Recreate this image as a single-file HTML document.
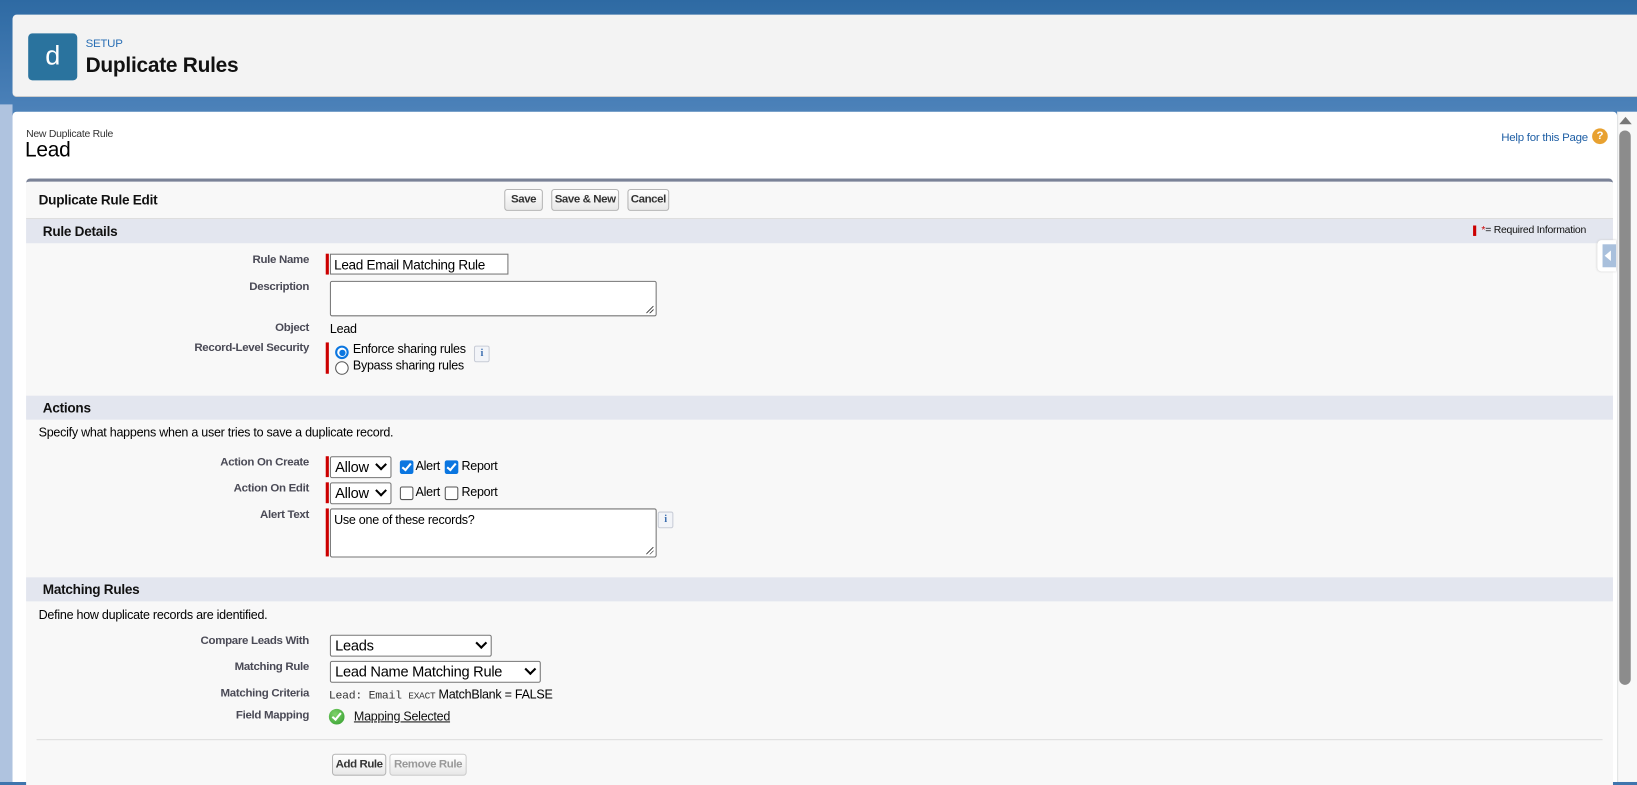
<!DOCTYPE html>
<html><head><meta charset="utf-8"><style>
html,body{margin:0;padding:0;width:1637px;height:782px;overflow:hidden;background:#3f75ad;font-family:"Liberation Sans",Arial,sans-serif;letter-spacing:-0.25px}
#w{position:absolute;left:0;top:0;width:1568px;height:749px;transform:scale(1.044);transform-origin:0 0;background:linear-gradient(#2e6aa3,#4a80b8 100px,#9fb8d8 300px,#b0c4df)}
.a{position:absolute}
.lbl{position:absolute;right:1272px;font-size:11px;color:#4a4a56;font-weight:bold;white-space:nowrap;text-align:right;letter-spacing:-0.3px}
.sec{position:absolute;left:25px;width:1520px;height:23px;background:#e3e6ef;font-size:13px;font-weight:bold;color:#111}
.sec span{position:absolute;left:16px;top:4px}
.btn{position:absolute;height:19px;border:1px solid #b5b5b5;border-radius:3px;background:linear-gradient(#fff,#e8e8e8);font-size:11px;font-weight:bold;color:#333;text-align:center;line-height:19px;box-sizing:content-box;letter-spacing:-0.4px}
.req{position:absolute;left:312px;width:3px;background:#c00}
.inp{position:absolute;background:#fff;border:1px solid #767676;box-sizing:border-box;font-size:13px;color:#000;white-space:nowrap;overflow:hidden}
.sel{position:absolute;background:#fff;border:1px solid #767676;border-radius:2px;box-sizing:border-box;font-size:14px;color:#000;padding-left:4px;line-height:18px;white-space:nowrap}
.sel i{position:absolute;right:5px;width:6px;height:6px;border-right:2px solid #000;border-bottom:2px solid #000;transform:rotate(45deg);top:3px}
.t{position:absolute;font-size:12px;color:#000;white-space:nowrap}
.info{position:absolute;width:13px;height:14px;border:1px solid #c8ccd6;border-radius:2px;background:#f2f4f8;color:#3d6fb0;font:bold 10px "Liberation Serif",serif;text-align:center;line-height:14px}
.cb{position:absolute;width:11px;height:11px;border:1px solid #555;border-radius:2px;background:#fff}
.cb.on{background:#0b76e0;border-color:#0b76e0}
.cb.on:after{content:"";position:absolute;left:3px;top:0px;width:3px;height:7px;border-right:2px solid #fff;border-bottom:2px solid #fff;transform:rotate(40deg)}
.rz{position:absolute;right:2px;bottom:2px;width:7px;height:7px;background:linear-gradient(135deg,transparent 45%,#555 45%,#555 55%,transparent 55%,transparent 70%,#555 70%,#555 80%,transparent 80%)}
</style></head><body><div id="w">
<div class="a" style="left:0;top:100px;width:12px;height:649px;background:#afc3df"></div>
<div class="a" style="left:12px;top:14px;width:1560px;height:78px;background:#f3f3f3;border-radius:4px;border-bottom:1px solid #ccc"></div>
<div class="a" style="left:27px;top:32px;width:47px;height:45px;background:#2a739e;border-radius:4px;color:#fff;font-size:26px;text-align:center;line-height:42px">d</div>
<div class="a" style="left:82px;top:36px;font-size:11px;color:#2a6fb5">SETUP</div>
<div class="a" style="left:82px;top:52px;font-size:20px;font-weight:bold;color:#111">Duplicate Rules</div>
<div class="a" style="left:12px;top:107px;width:1537px;height:642px;background:#fff;border-radius:4px 4px 0 0"></div>
<div class="a" style="left:25px;top:123px;font-size:10px;color:#333">New Duplicate Rule</div>
<div class="a" style="left:24px;top:133px;font-size:20px;color:#000">Lead</div>
<div class="a" style="left:1438px;top:126px;font-size:11px;color:#1f5fa5">Help for this Page</div>
<div class="a" style="left:1525px;top:123px;width:15px;height:15px;border-radius:50%;background:#e8a130;color:#fff;font-size:11px;font-weight:bold;text-align:center;line-height:15px">?</div>
<div class="a" style="left:25px;top:171px;width:1520px;height:578px;background:#f8f8f8;border-top:3px solid #7a8297;border-radius:4px 4px 0 0"></div>
<div class="a" style="left:25px;top:209px;width:1520px;height:1px;background:#d8d8d8"></div>
<div class="a" style="left:37px;top:184px;font-size:13px;font-weight:bold;color:#111">Duplicate Rule Edit</div>
<div class="btn" style="left:483px;top:181px;width:35px">Save</div>
<div class="btn" style="left:528px;top:181px;width:63px">Save &amp; New</div>
<div class="btn" style="left:601px;top:181px;width:38px">Cancel</div>
<div class="sec" style="top:210px"><span>Rule Details</span></div>
<div class="a" style="left:1411px;top:216px;width:3px;height:10px;background:#c00"></div>
<div class="a" style="left:1419px;top:215px;font-size:10px;color:#111"><span style="color:#c00">*</span>= Required Information</div>
<div class="a" style="left:1530px;top:230px;width:18px;height:30px;background:#fff;border-radius:4px 0 0 4px;box-shadow:0 0 2px #ccc"></div>
<div class="a" style="left:1535px;top:234px;width:13px;height:22px;background:#a9c0dc"></div>
<div class="a" style="left:1537px;top:240px;border:5px solid transparent;border-right:6px solid #fff;border-left:0"></div>

<div class="lbl" style="top:243px">Rule Name</div>
<div class="req" style="top:243px;height:20px"></div>
<div class="inp" style="left:316px;top:243px;width:171px;height:20px;font-size:13px;padding:2px 3px;letter-spacing:-0.3px">Lead Email Matching Rule</div>
<div class="lbl" style="top:269px">Description</div>
<div class="inp" style="left:316px;top:269px;width:313px;height:34px;border-radius:2px"><div class="rz"></div></div>
<div class="lbl" style="top:308px">Object</div>
<div class="t" style="left:316px;top:308px">Lead</div>
<div class="lbl" style="top:327px">Record-Level Security</div>
<div class="req" style="top:328px;height:30px"></div>
<div class="a" style="left:321px;top:331px;width:9px;height:9px;border:2px solid #0b76e0;border-radius:50%;background:#fff"><div style="margin:1.5px;width:6px;height:6px;border-radius:50%;background:#0b76e0"></div></div>
<div class="t" style="left:338px;top:327px">Enforce sharing rules</div>
<div class="a" style="left:321px;top:346px;width:11px;height:11px;border:1px solid #555;border-radius:50%;background:#fff"></div>
<div class="t" style="left:338px;top:343px">Bypass sharing rules</div>
<div class="info" style="left:454px;top:331px">i</div>

<div class="sec" style="top:379px"><span>Actions</span></div>
<div class="t" style="left:37px;top:407px">Specify what happens when a user tries to save a duplicate record.</div>
<div class="lbl" style="top:437px">Action On Create</div>
<div class="req" style="top:437px;height:20px"></div>
<div class="sel" style="left:316px;top:437px;width:59px;height:21px">Allow<i></i></div>
<div class="cb on" style="left:383px;top:441px"></div><div class="t" style="left:398px;top:439px">Alert</div>
<div class="cb on" style="left:426px;top:441px"></div><div class="t" style="left:442px;top:439px">Report</div>
<div class="lbl" style="top:462px">Action On Edit</div>
<div class="req" style="top:462px;height:20px"></div>
<div class="sel" style="left:316px;top:462px;width:59px;height:21px">Allow<i></i></div>
<div class="cb" style="left:383px;top:466px"></div><div class="t" style="left:398px;top:464px">Alert</div>
<div class="cb" style="left:426px;top:466px"></div><div class="t" style="left:442px;top:464px">Report</div>
<div class="lbl" style="top:487px">Alert Text</div>
<div class="req" style="top:487px;height:46px"></div>
<div class="inp" style="left:316px;top:487px;width:313px;height:47px;border-radius:2px;font-size:12px;padding:3px 3px">Use one of these records?<div class="rz"></div></div>
<div class="info" style="left:630px;top:490px">i</div>

<div class="sec" style="top:553px"><span>Matching Rules</span></div>
<div class="t" style="left:37px;top:582px">Define how duplicate records are identified.</div>
<div class="lbl" style="top:608px">Compare Leads With</div>
<div class="sel" style="left:316px;top:608px;width:155px;height:21px">Leads<i></i></div>
<div class="lbl" style="top:633px">Matching Rule</div>
<div class="sel" style="left:316px;top:633px;width:202px;height:21px">Lead Name Matching Rule<i></i></div>
<div class="lbl" style="top:658px">Matching Criteria</div>
<div class="t" style="left:315px;top:658px"><span style="font-family:'Liberation Mono',monospace;font-size:11px;color:#333">Lead: Email <span style="font-size:9px">EXACT</span></span> MatchBlank = FALSE</div>
<div class="lbl" style="top:679px">Field Mapping</div>
<div class="a" style="left:315px;top:679px;width:15px;height:15px;border-radius:50%;background:radial-gradient(circle at 40% 35%,#7fd36b,#2f9a2a)"><div style="position:absolute;left:5px;top:2px;width:3px;height:7px;border-right:2px solid #fff;border-bottom:2px solid #fff;transform:rotate(40deg)"></div></div>
<div class="t" style="left:339px;top:679px;text-decoration:underline;color:#111">Mapping Selected</div>
<div class="a" style="left:35px;top:708px;width:1500px;height:1px;background:#ddd"></div>
<div class="btn" style="left:318px;top:722px;width:50px">Add Rule</div>
<div class="btn" style="left:373px;top:722px;width:72px;color:#999;border-color:#ccc">Remove Rule</div>

<div class="a" style="left:1549px;top:107px;width:19px;height:642px;background:#f8f8f8;border-left:1px solid #e4e4e4"></div>
<div class="a" style="left:1551px;top:112px;border:6px solid transparent;border-bottom:7px solid #777;border-top:0"></div>
<div class="a" style="left:1551px;top:125px;width:11px;height:531px;background:#8c8c8c;border-radius:6px"></div>
</div></body></html>
